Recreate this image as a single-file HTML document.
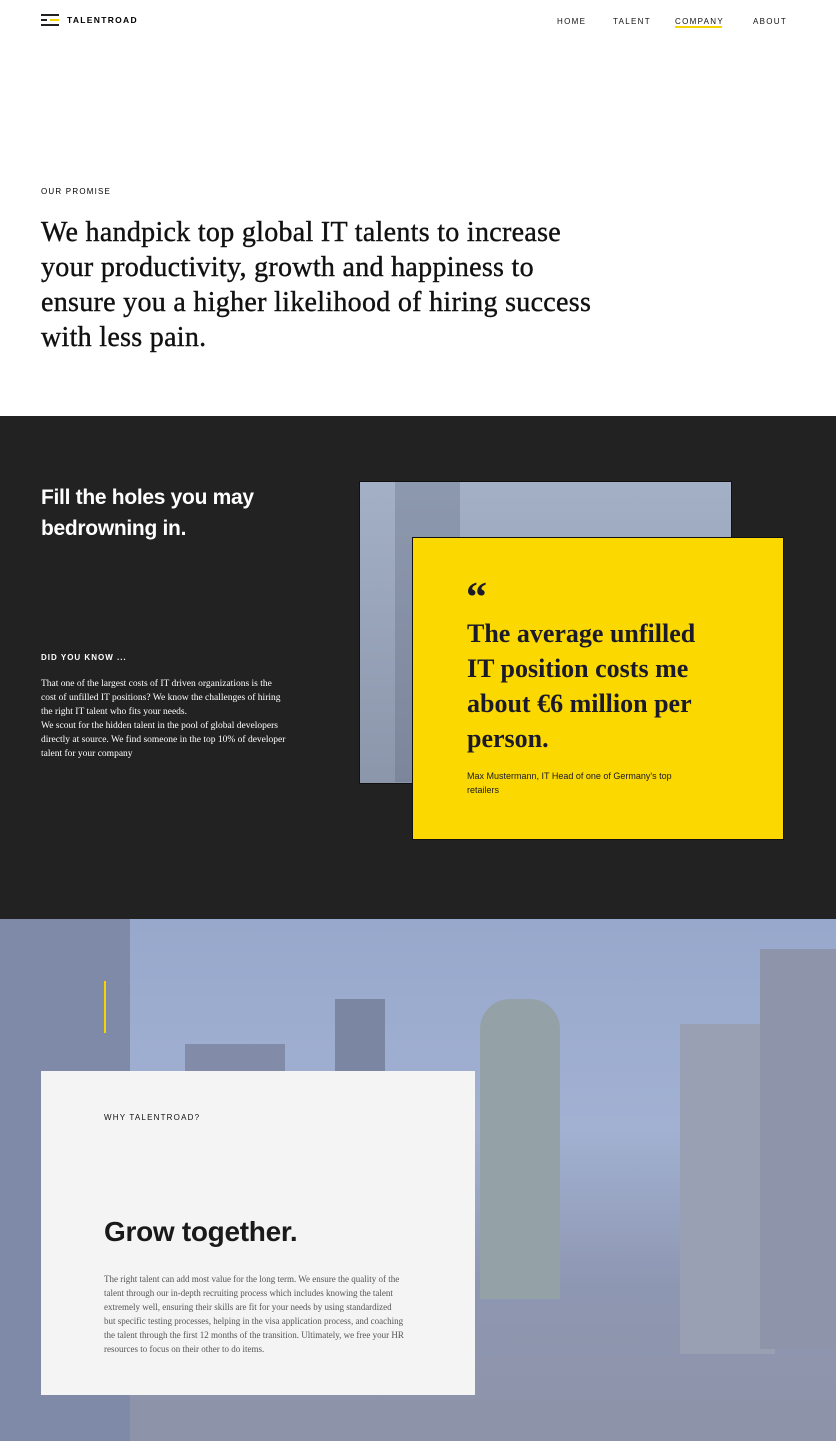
<!DOCTYPE html>
<html><head><meta charset="utf-8"><style>
*{margin:0;padding:0;box-sizing:border-box}
body{width:836px;height:1441px;overflow:hidden;background:#fff;font-family:"Liberation Sans",sans-serif;position:relative}
.a{position:absolute}
.serif{font-family:"Liberation Serif",serif}
nav span{position:absolute;top:17px;font-size:8px;letter-spacing:1.3px;color:#111}
</style></head><body>
<div class="a" style="left:41px;top:14px;width:18px;height:2px;background:#222"></div>
<div class="a" style="left:41px;top:19px;width:6px;height:2px;background:#222"></div>
<div class="a" style="left:50px;top:19px;width:9px;height:2px;background:#f5d400"></div>
<div class="a" style="left:41px;top:24px;width:18px;height:2px;background:#222"></div>
<div class="a" style="left:67px;top:15px;font-size:8.5px;font-weight:bold;letter-spacing:1.3px">TALENTROAD</div>
<nav><span style="left:557px">HOME</span><span style="left:613px">TALENT</span><span style="left:675px">COMPANY</span><span style="left:753px">ABOUT</span></nav>
<div class="a" style="left:675px;top:26px;width:47px;height:2px;background:#f5d400"></div>
<div class="a" style="left:41px;top:187px;font-size:8px;letter-spacing:1.2px">OUR PROMISE</div>
<div class="a serif" style="left:41px;top:215px;width:575px;font-size:28px;line-height:35px;color:#111;letter-spacing:0.3px;-webkit-text-stroke:0.4px #111">We handpick top global IT talents to increase your productivity, growth and happiness to ensure you a higher likelihood of hiring success with less pain.</div>

<div class="a" style="left:0;top:416px;width:836px;height:503px;background:#222"></div>
<div class="a" style="left:41px;top:482px;width:260px;font-size:21px;font-weight:bold;line-height:31px;color:#fff;letter-spacing:-0.3px">Fill the holes you may bedrowning in.</div>
<div class="a" style="left:41px;top:653px;font-size:8px;font-weight:bold;letter-spacing:1px;color:#fff">DID YOU KNOW ...</div>
<div class="a serif" style="left:41px;top:677px;width:245px;font-size:9.5px;line-height:14px;color:#fff">That one of the largest costs of IT driven organizations is the cost of unfilled IT positions? We know the challenges of hiring the right IT talent who fits your needs.<br>We scout for the hidden talent in the pool of global developers directly at source. We find someone in the top 10% of developer talent for your company</div>
<div class="a" style="left:359px;top:481px;width:373px;height:303px;background:linear-gradient(180deg,#a3b0c6,#8c96ab);border:1px solid #111"></div>
<div class="a" style="left:395px;top:482px;width:65px;height:300px;background:rgba(90,100,120,.3)"></div>
<div class="a" style="left:412px;top:537px;width:372px;height:303px;background:#fad800;border:1px solid #111"></div>
<div class="a serif" style="left:466px;top:578px;font-size:42px;font-weight:bold;color:#1a1a2a;line-height:40px">“</div>
<div class="a serif" style="left:467px;top:616px;width:255px;font-size:26px;font-weight:bold;line-height:35px;color:#1a1a2a">The average unfilled IT position costs me about €6 million per person.</div>
<div class="a" style="left:467px;top:769px;width:212px;font-size:9px;line-height:14px;color:#1a1a2a">Max Mustermann, IT Head of one of Germany's top retailers</div>

<div class="a" style="left:0;top:919px;width:836px;height:522px;background:linear-gradient(180deg,#97a8cc 0%,#a2b1d2 40%,#8e97b2 70%,#8d93a8 100%);overflow:hidden">
<div class="a" style="left:0;top:0;width:130px;height:522px;background:#7f8aa8"></div>
<div class="a" style="left:480px;top:80px;width:80px;height:300px;background:#94a2a8;border-radius:30px 30px 0 0"></div>
<div class="a" style="left:680px;top:105px;width:95px;height:330px;background:#9aa0b3"></div>
<div class="a" style="left:760px;top:30px;width:76px;height:400px;background:#8e95ab"></div>
<div class="a" style="left:335px;top:80px;width:50px;height:100px;background:#7b86a3"></div>
<div class="a" style="left:185px;top:125px;width:100px;height:60px;background:#828ca8"></div>
</div>
<div class="a" style="left:104px;top:981px;width:2px;height:52px;background:#f5d400"></div>
<div class="a" style="left:41px;top:1071px;width:434px;height:324px;background:#f4f4f4"></div>
<div class="a" style="left:104px;top:1113px;font-size:8px;letter-spacing:1.2px;color:#111">WHY TALENTROAD?</div>
<div class="a" style="left:104px;top:1216px;font-size:28px;font-weight:bold;color:#1a1a1a;letter-spacing:-0.3px">Grow together.</div>
<div class="a serif" style="left:104px;top:1272px;width:300px;font-size:9px;line-height:14px;color:#555">The right talent can add most value for the long term. We ensure the quality of the talent through our in-depth recruiting process which includes knowing the talent extremely well, ensuring their skills are fit for your needs by using standardized but specific testing processes, helping in the visa application process, and coaching the talent through the first 12 months of the transition. Ultimately, we free your HR resources to focus on their other to do items.</div>
</body></html>
